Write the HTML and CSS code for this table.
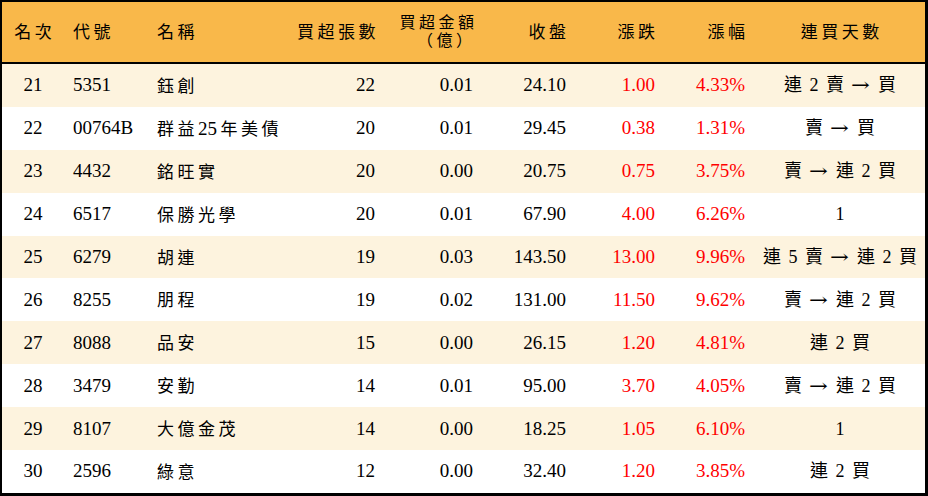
FILE: index.html
```html
<!DOCTYPE html>
<html lang="zh-Hant">
<head>
<meta charset="utf-8">
<link rel="stylesheet" href="styles.css">
</head>
<body>
<div class="board">
  <div class="row head">
    <div class="c c1"><span class="cj">名次</span></div>
    <div class="c c2"><span class="cj">代號</span></div>
    <div class="c c3"><span class="cj">名稱</span></div>
    <div class="c c4"><span class="cj">買超張數</span></div>
    <div class="c c5 two"><span class="cj">買超金額</span><span class="cj paren">（億）</span></div>
    <div class="c c6"><span class="cj">收盤</span></div>
    <div class="c c7"><span class="cj">漲跌</span></div>
    <div class="c c8"><span class="cj">漲幅</span></div>
    <div class="c c9"><span class="cj">連買天數</span></div>
  </div>

  <div class="row odd">
    <div class="c c1">21</div><div class="c c2">5351</div><div class="c c3"><span class="cj">鈺創</span></div>
    <div class="c c4">22</div><div class="c c5">0.01</div><div class="c c6">24.10</div>
    <div class="c c7 up">1.00</div><div class="c c8 up">4.33%</div><div class="c c9 streak">連 2 賣 <span class="ar">→</span> 買</div>
  </div>
  <div class="row">
    <div class="c c1">22</div><div class="c c2">00764B</div><div class="c c3"><span class="cj">群益</span><span class="num">25</span><span class="cj">年美債</span></div>
    <div class="c c4">20</div><div class="c c5">0.01</div><div class="c c6">29.45</div>
    <div class="c c7 up">0.38</div><div class="c c8 up">1.31%</div><div class="c c9 streak">賣 <span class="ar">→</span> 買</div>
  </div>
  <div class="row odd">
    <div class="c c1">23</div><div class="c c2">4432</div><div class="c c3"><span class="cj">銘旺實</span></div>
    <div class="c c4">20</div><div class="c c5">0.00</div><div class="c c6">20.75</div>
    <div class="c c7 up">0.75</div><div class="c c8 up">3.75%</div><div class="c c9 streak">賣 <span class="ar">→</span> 連 2 買</div>
  </div>
  <div class="row">
    <div class="c c1">24</div><div class="c c2">6517</div><div class="c c3"><span class="cj">保勝光學</span></div>
    <div class="c c4">20</div><div class="c c5">0.01</div><div class="c c6">67.90</div>
    <div class="c c7 up">4.00</div><div class="c c8 up">6.26%</div><div class="c c9 streak">1</div>
  </div>
  <div class="row odd">
    <div class="c c1">25</div><div class="c c2">6279</div><div class="c c3"><span class="cj">胡連</span></div>
    <div class="c c4">19</div><div class="c c5">0.03</div><div class="c c6">143.50</div>
    <div class="c c7 up">13.00</div><div class="c c8 up">9.96%</div><div class="c c9 streak">連 5 賣 <span class="ar">→</span> 連 2 買</div>
  </div>
  <div class="row">
    <div class="c c1">26</div><div class="c c2">8255</div><div class="c c3"><span class="cj">朋程</span></div>
    <div class="c c4">19</div><div class="c c5">0.02</div><div class="c c6">131.00</div>
    <div class="c c7 up">11.50</div><div class="c c8 up">9.62%</div><div class="c c9 streak">賣 <span class="ar">→</span> 連 2 買</div>
  </div>
  <div class="row odd">
    <div class="c c1">27</div><div class="c c2">8088</div><div class="c c3"><span class="cj">品安</span></div>
    <div class="c c4">15</div><div class="c c5">0.00</div><div class="c c6">26.15</div>
    <div class="c c7 up">1.20</div><div class="c c8 up">4.81%</div><div class="c c9 streak">連 2 買</div>
  </div>
  <div class="row">
    <div class="c c1">28</div><div class="c c2">3479</div><div class="c c3"><span class="cj">安勤</span></div>
    <div class="c c4">14</div><div class="c c5">0.01</div><div class="c c6">95.00</div>
    <div class="c c7 up">3.70</div><div class="c c8 up">4.05%</div><div class="c c9 streak">賣 <span class="ar">→</span> 連 2 買</div>
  </div>
  <div class="row odd">
    <div class="c c1">29</div><div class="c c2">8107</div><div class="c c3"><span class="cj">大億金茂</span></div>
    <div class="c c4">14</div><div class="c c5">0.00</div><div class="c c6">18.25</div>
    <div class="c c7 up">1.05</div><div class="c c8 up">6.10%</div><div class="c c9 streak">1</div>
  </div>
  <div class="row">
    <div class="c c1">30</div><div class="c c2">2596</div><div class="c c3"><span class="cj">綠意</span></div>
    <div class="c c4">12</div><div class="c c5">0.00</div><div class="c c6">32.40</div>
    <div class="c c7 up">1.20</div><div class="c c8 up">3.85%</div><div class="c c9 streak">連 2 買</div>
  </div>
</div>
</body>
</html>
```
FILE: styles.css
```css
html, body {
  margin: 0;
  padding: 0;
  background: #ffffff;
}
.board {
  box-sizing: border-box;
  width: 928px;
  height: 496px;
  border-style: solid;
  border-color: #000;
  border-width: 2px 3px 3px 2px;
  display: flex;
  flex-direction: column;
  font-family: "Liberation Serif", "Noto Sans CJK TC", serif;
  font-size: 19px;
  color: #000;
}
.row {
  display: grid;
  grid-template-columns: 62px 93px 140px 80px 98px 93px 89px 98px 170px;
  align-items: center;
  height: 42.9px;
  background: #ffffff;
}
.row.odd {
  background: #fdf3de;
}
.row.head {
  height: 60px;
  background: #f9b84a;
  border-bottom: 2px solid #000;
  font-size: 17px;
}
.c {
  white-space: nowrap;
  line-height: 20px;
}
.cj {
  font-family: "Noto Sans CJK TC", sans-serif;
  font-size: 17px;
  letter-spacing: 3.5px;
  margin-right: -3.5px;
}
.num {
  font-family: "Liberation Serif", serif;
  font-size: 19px;
  margin: 0 3.5px 0 3.5px;
}
.c1 { text-align: center; }
.c2 { padding-left: 9px; }
.c3 { padding-left: 0; }
.c4 { text-align: right; padding-right: 2px; }
.c5 { text-align: right; padding-right: 2px; }
.c6 { text-align: right; padding-right: 2px; }
.c7 { text-align: right; padding-right: 2px; }
.c8 { text-align: right; padding-right: 10px; }
.c9 { text-align: center; }
.two {
  display: flex;
  flex-direction: column;
  align-items: flex-end;
  line-height: 18.5px;
  padding-right: 1px;
}
.two .cj {
  font-family: "Liberation Serif", "Noto Sans CJK TC", serif;
  font-size: 16px;
  line-height: 18.5px;
}
.two .paren {
  padding-right: 2px;
}
.up {
  color: #ff0000;
}
.streak {
  font-family: "Liberation Serif", "Noto Sans CJK TC", serif;
  font-size: 18px;
  word-spacing: 3px;
}
.ar {
  font-family: "DejaVu Serif", serif;
  font-size: 18px;
  display: inline-block;
  transform: scaleX(1.25);
  margin: 0 2px;
}
```
